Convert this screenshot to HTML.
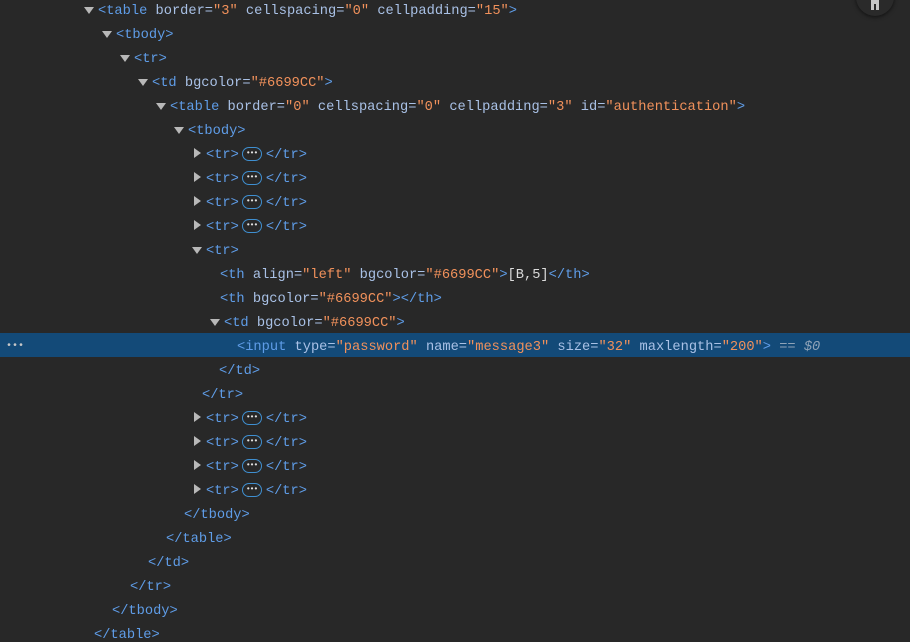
<!DOCTYPE html>
<html><head><meta charset="utf-8"><style>
html,body{margin:0;padding:0;background:#282828;width:910px;height:642px;overflow:hidden;}
body{font-family:"Liberation Mono",monospace;font-size:13.7px;position:relative;}
.l{position:absolute;height:24px;line-height:24px;white-space:pre;color:#a9c1e6;margin-top:2px;}
.t{color:#5f9de8}
.a{color:#a9c1e6}
.v{color:#f1915b}
.x{color:#dcdcdc}
.hl{position:absolute;left:0;top:333px;width:910px;height:24px;background:#134a78;}
.dn{position:absolute;width:0;height:0;border-left:5px solid transparent;border-right:5px solid transparent;border-top:7px solid #b8b8b8;}
.rt{position:absolute;width:0;height:0;border-top:5px solid transparent;border-bottom:5px solid transparent;border-left:7px solid #b8b8b8;}
.dots{display:inline-block;width:20px;height:14px;border:1px solid #3f8fd0;border-radius:7px;vertical-align:-3px;margin:0 4px 0 3px;position:relative;box-sizing:border-box;}
.dots:after{content:"•••";position:absolute;left:3px;top:-6px;font-size:8px;color:#e0e0e0;letter-spacing:-1px;}
.eq{color:#8fa3b8;font-style:italic;}
</style></head><body>
<div class="hl"></div>
<div class="l" style="left:6px;top:333px;color:#c8c8c8;font-size:10px;">•••</div>
<div class="dn" style="left:84px;top:7px"></div>
<div class="l" style="left:98px;top:-2px"><span class="t">&lt;table</span> border=<span class="v">"3"</span> cellspacing=<span class="v">"0"</span> cellpadding=<span class="v">"15"</span><span class="t">&gt;</span></div>
<div class="dn" style="left:102px;top:31px"></div>
<div class="l" style="left:116px;top:22px"><span class="t">&lt;tbody&gt;</span></div>
<div class="dn" style="left:120px;top:55px"></div>
<div class="l" style="left:134px;top:46px"><span class="t">&lt;tr&gt;</span></div>
<div class="dn" style="left:138px;top:79px"></div>
<div class="l" style="left:152px;top:70px"><span class="t">&lt;td</span> bgcolor=<span class="v">"#6699CC"</span><span class="t">&gt;</span></div>
<div class="dn" style="left:156px;top:103px"></div>
<div class="l" style="left:170px;top:94px"><span class="t">&lt;table</span> border=<span class="v">"0"</span> cellspacing=<span class="v">"0"</span> cellpadding=<span class="v">"3"</span> id=<span class="v">"authentication"</span><span class="t">&gt;</span></div>
<div class="dn" style="left:174px;top:127px"></div>
<div class="l" style="left:188px;top:118px"><span class="t">&lt;tbody&gt;</span></div>
<div class="rt" style="left:194px;top:148px"></div>
<div class="l" style="left:206px;top:142px"><span class="t">&lt;tr&gt;</span><span class="dots"></span><span class="t">&lt;/tr&gt;</span></div>
<div class="rt" style="left:194px;top:172px"></div>
<div class="l" style="left:206px;top:166px"><span class="t">&lt;tr&gt;</span><span class="dots"></span><span class="t">&lt;/tr&gt;</span></div>
<div class="rt" style="left:194px;top:196px"></div>
<div class="l" style="left:206px;top:190px"><span class="t">&lt;tr&gt;</span><span class="dots"></span><span class="t">&lt;/tr&gt;</span></div>
<div class="rt" style="left:194px;top:220px"></div>
<div class="l" style="left:206px;top:214px"><span class="t">&lt;tr&gt;</span><span class="dots"></span><span class="t">&lt;/tr&gt;</span></div>
<div class="dn" style="left:192px;top:247px"></div>
<div class="l" style="left:206px;top:238px"><span class="t">&lt;tr&gt;</span></div>
<div class="l" style="left:220px;top:262px"><span class="t">&lt;th</span> align=<span class="v">"left"</span> bgcolor=<span class="v">"#6699CC"</span><span class="t">&gt;</span><span class="x">[B,5]</span><span class="t">&lt;/th&gt;</span></div>
<div class="l" style="left:220px;top:286px"><span class="t">&lt;th</span> bgcolor=<span class="v">"#6699CC"</span><span class="t">&gt;&lt;/th&gt;</span></div>
<div class="dn" style="left:210px;top:319px"></div>
<div class="l" style="left:224px;top:310px"><span class="t">&lt;td</span> bgcolor=<span class="v">"#6699CC"</span><span class="t">&gt;</span></div>
<div class="l" style="left:237px;top:334px"><span class="t">&lt;input</span> type=<span class="v">"password"</span> name=<span class="v">"message3"</span> size=<span class="v">"32"</span> maxlength=<span class="v">"200"</span><span class="t">&gt;</span> <span class="eq">== $0</span></div>
<div class="l" style="left:219px;top:358px"><span class="t">&lt;/td&gt;</span></div>
<div class="l" style="left:202px;top:382px"><span class="t">&lt;/tr&gt;</span></div>
<div class="rt" style="left:194px;top:412px"></div>
<div class="l" style="left:206px;top:406px"><span class="t">&lt;tr&gt;</span><span class="dots"></span><span class="t">&lt;/tr&gt;</span></div>
<div class="rt" style="left:194px;top:436px"></div>
<div class="l" style="left:206px;top:430px"><span class="t">&lt;tr&gt;</span><span class="dots"></span><span class="t">&lt;/tr&gt;</span></div>
<div class="rt" style="left:194px;top:460px"></div>
<div class="l" style="left:206px;top:454px"><span class="t">&lt;tr&gt;</span><span class="dots"></span><span class="t">&lt;/tr&gt;</span></div>
<div class="rt" style="left:194px;top:484px"></div>
<div class="l" style="left:206px;top:478px"><span class="t">&lt;tr&gt;</span><span class="dots"></span><span class="t">&lt;/tr&gt;</span></div>
<div class="l" style="left:184px;top:502px"><span class="t">&lt;/tbody&gt;</span></div>
<div class="l" style="left:166px;top:526px"><span class="t">&lt;/table&gt;</span></div>
<div class="l" style="left:148px;top:550px"><span class="t">&lt;/td&gt;</span></div>
<div class="l" style="left:130px;top:574px"><span class="t">&lt;/tr&gt;</span></div>
<div class="l" style="left:112px;top:598px"><span class="t">&lt;/tbody&gt;</span></div>
<div class="l" style="left:94px;top:622px"><span class="t">&lt;/table&gt;</span></div>
<div style="position:absolute;left:856px;top:-22px;width:38px;height:38px;border-radius:50%;background:#2a2a2a;box-shadow:0 1px 4px rgba(0,0,0,.6);"></div>
<div style="position:absolute;left:871px;top:0;width:8px;height:10px;background:#c8c8c8;"></div>
<div style="position:absolute;left:874px;top:4px;width:2px;height:6px;background:#2a2a2a;"></div>
</body></html>
